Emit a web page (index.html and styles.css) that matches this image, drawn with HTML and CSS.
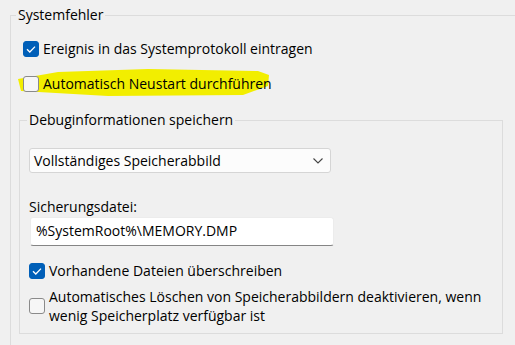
FILE: index.html
```html
<!DOCTYPE html>
<html lang="de">
<head>
<meta charset="utf-8">
<title>Systemfehler</title>
<link rel="stylesheet" href="styles.css">
</head>
<body>
<fieldset class="group outer">
  <legend class="legend">Systemfehler</legend>
  <label class="check first">
    <span class="box checked"><svg viewBox="0 0 16 16" width="16" height="16"><path d="M4 8.2 L6.8 11 L12 5.6" fill="none" stroke="#fff" stroke-width="1.3"/></svg></span>
    <span class="text">Ereignis in das Systemprotokoll eintragen</span>
  </label>
  <label class="check second">
    <svg class="marker" viewBox="0 0 260 30" width="260" height="30"><path d="M0 10 L40 3 L130 0 L240 2 L251 6 L250 17 L225 26 L90 27 L3 22 Z" fill="#f2ee00"/></svg>
    <span class="box"></span>
    <span class="text">Automatisch Neustart durchführen</span>
  </label>
  <fieldset class="group inner">
    <legend class="legend">Debuginformationen speichern</legend>
    <div class="select">
      <span>Vollständiges Speicherabbild</span>
      <svg class="chev" viewBox="0 0 10 6" width="10" height="6"><path d="M0.5 0.5 L5 5 L9.5 0.5" fill="none" stroke="#444" stroke-width="1.1"/></svg>
    </div>
    <div class="label">Sicherungsdatei:</div>
    <div class="input">%SystemRoot%\MEMORY.DMP</div>
    <label class="check third">
      <span class="box checked"><svg viewBox="0 0 16 16" width="16" height="16"><path d="M4 8.2 L6.8 11 L12 5.6" fill="none" stroke="#fff" stroke-width="1.3"/></svg></span>
      <span class="text">Vorhandene Dateien überschreiben</span>
    </label>
    <label class="check fourth">
      <span class="box"></span>
      <span class="text">Automatisches Löschen von Speicherabbildern deaktivieren, wenn wenig Speicherplatz verfügbar ist</span>
    </label>
  </fieldset>
</fieldset>
</body>
</html>
```
FILE: styles.css
```css
html, body {
  margin: 0;
  padding: 0;
  background: #f0f0f0;
  overflow: hidden;
}
body {
  width: 515px;
  height: 345px;
  font-family: "Open Sans", "Noto Sans", sans-serif;
  font-size: 14px;
  line-height: 20px;
  color: #000;
}
.group {
  border: 1px solid #dcdcdc;
  margin: 0;
  padding: 0;
  min-width: 0;
  display: flex;
  flex-direction: column;
  align-items: flex-start;
  box-sizing: border-box;
}
.outer {
  margin: 5px 0 0 10px;
  width: 560px;
  height: 400px;
}
.legend {
  padding: 0 2px;
  margin-left: 5px;
  line-height: 20px;
}
.outer > .check { margin-left: 12px; }
.inner {
  margin: 16px 0 0 8px;
  width: 484px;
  height: 224px;
}
.inner .legend { margin-left: 7px; }
.inner > .select,
.inner > .label,
.inner > .check { margin-left: 9px; }
.check {
  display: flex;
  align-items: flex-start;
  gap: 4px;
  position: relative;
}
.box {
  flex: none;
  width: 16px;
  height: 16px;
  box-sizing: border-box;
  border: 1px solid #8a8a8a;
  border-radius: 3px;
  background: #f6f6f6;
  margin-top: 2px;
  position: relative;
}
.box.checked {
  background: #005fb8;
  border-color: #005fb8;
}
.box svg { position: absolute; left: -1px; top: -1px; }
.text { position: relative; }
.first { margin-top: 14px; }
.second { margin-top: 15px; }
.marker {
  position: absolute;
  left: -5px;
  top: -5px;
}
.select {
  margin-top: 18px;
  width: 302px;
  height: 25px;
  box-sizing: border-box;
  border: 1px solid #d5d5d5;
  border-radius: 3px;
  background: #fcfcfc;
  display: flex;
  align-items: center;
  justify-content: space-between;
  padding: 0 7px 0 4px;
}
.chev { margin-top: 1px; }
.label { margin-top: 24px; }
.input {
  margin-top: 0;
  margin-left: 10px;
  width: 304px;
  height: 29px;
  box-sizing: border-box;
  background: #fff;
  border: 1px solid #ececec;
  border-bottom: 1px solid #858585;
  border-radius: 3px;
  padding: 3px 0 0 5px;
}
.third { margin-top: 15px; }
.fourth { margin-top: 6px; line-height: 19px; }
.fourth .box { margin-top: 11px; }
.fourth .text { width: 440px; }
```
